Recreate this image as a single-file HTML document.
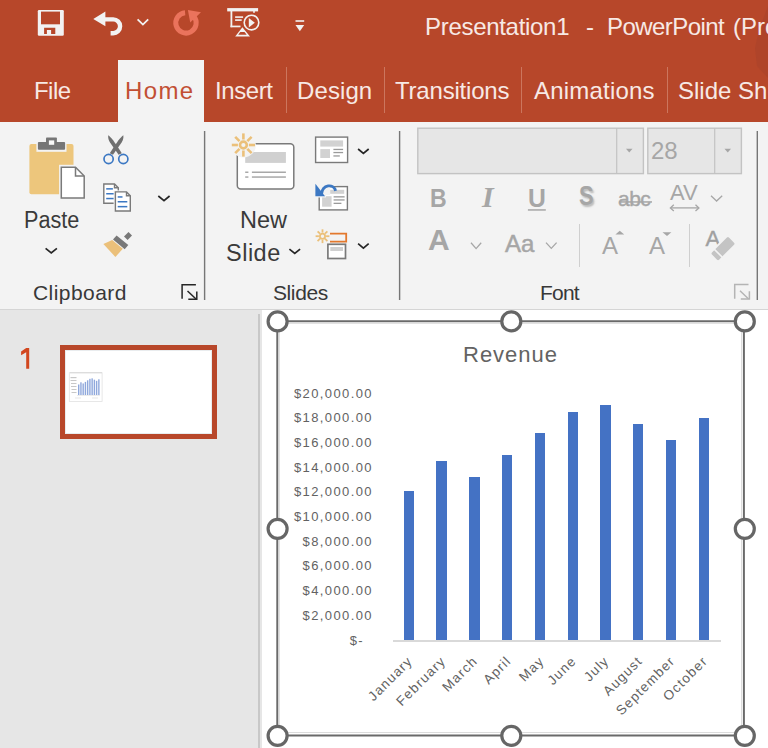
<!DOCTYPE html>
<html><head><meta charset="utf-8">
<style>
*{margin:0;padding:0;box-sizing:border-box}
html,body{width:768px;height:748px;overflow:hidden;background:#fff}
body{position:relative;font-family:"Liberation Sans",sans-serif}
.a{position:absolute}
.t{position:absolute;line-height:1;white-space:nowrap}
svg{position:absolute;overflow:visible}
.lab{font-size:13px;letter-spacing:1.4px;color:#626262;text-align:right}
.xl{font-size:13.5px;letter-spacing:1.2px;color:#626262;transform-origin:100% 50%;transform:rotate(-45deg)}
</style></head><body>
<!-- title bar + tabs -->
<div class="a" style="left:0;top:0;width:768px;height:122px;background:#B7472A"></div>
<div class="a" style="left:118px;top:60px;width:86px;height:62px;background:#F3F3F3"></div>

<svg width="768" height="122" style="left:0;top:0"><path d="M768 6 L759 30 L755 48 L757 66 L768 78 Z" fill="#AD432A" opacity="0.8"/></svg>
<!-- title text -->
<div class="t" id="t1" style="left:425px;top:15px;font-size:24px;letter-spacing:-0.3px;color:#F7E9E5">Presentation1</div>
<div class="t" style="left:586px;top:15px;font-size:24px;color:#F7E9E5">-</div>
<div class="t" id="t2" style="left:607px;top:15px;font-size:24px;letter-spacing:-0.55px;color:#F7E9E5">PowerPoint</div>
<div class="t" style="left:733px;top:15px;font-size:24px;color:#F7E9E5">(Pro</div>

<!-- tabs -->
<div class="t" id="tf" style="left:34px;top:79px;font-size:24px;letter-spacing:-0.55px;color:#F7E9E5">File</div>
<div class="t" style="left:125px;top:79px;font-size:24px;letter-spacing:1.4px;color:#C24F33">Home</div>
<div class="t" id="ti" style="left:215px;top:79px;font-size:24px;letter-spacing:-0.4px;color:#F7E9E5">Insert</div>
<div class="t" id="td" style="left:297px;top:79px;font-size:24px;letter-spacing:0.1px;color:#F7E9E5">Design</div>
<div class="t" id="tt" style="left:395px;top:79px;font-size:24px;letter-spacing:-0.2px;color:#F7E9E5">Transitions</div>
<div class="t" id="ta" style="left:534px;top:79px;font-size:24px;letter-spacing:0.2px;color:#F7E9E5">Animations</div>
<div class="t" style="left:678px;top:79px;font-size:24px;color:#F7E9E5">Slide Show</div>
<div class="a" style="left:286px;top:67px;width:1px;height:46px;background:#CC765E"></div>
<div class="a" style="left:384px;top:67px;width:1px;height:46px;background:#CC765E"></div>
<div class="a" style="left:521px;top:67px;width:1px;height:46px;background:#CC765E"></div>
<div class="a" style="left:667px;top:67px;width:1px;height:46px;background:#CC765E"></div>

<!-- ribbon -->
<div class="a" style="left:0;top:122px;width:768px;height:187px;background:#F3F3F3"></div>
<div class="a" style="left:0;top:309px;width:768px;height:1px;background:#D5D5D5"></div>
<svg width="768" height="310" style="left:0;top:0"><g fill="#767676"><rect x="203.9" y="131" width="1.4" height="169"/><rect x="398.9" y="131" width="1.4" height="169"/><rect x="756.6" y="131" width="1.4" height="169"/></g></svg>

<!-- title bar icons -->
<svg width="768" height="310" style="left:0;top:0">
<g fill="#F2F2F2">
<rect x="37.8" y="10" width="26" height="25.8" rx="1.2"/>
</g>
<rect x="41" y="11.6" width="19" height="12.7" fill="#B7472A"/>
<path d="M44.1 34.1 V27.8 H55.3 V34.1 H51.1 V30.1 H46.9 V34.1 Z" fill="#B7472A"/>
<path d="M93.3 19 L105.4 11.6 V26.2 Z" fill="#F2F2F2"/>
<path d="M103 19.4 H113.2 A6.9 6.9 0 0 1 113.2 33.2 H110.6" stroke="#F2F2F2" stroke-width="4.4" fill="none"/>
<polyline points="137.6,19.3 142.9,24.6 148.2,19.3" stroke="#F2F2F2" stroke-width="1.8" fill="none"/>
<path d="M185.1 12.7 A10.2 10.2 0 1 0 193.8 16.3" stroke="#EA735C" stroke-width="5" fill="none"/>
<path d="M187.9 10 L201 12.2 L190.2 22.5 Z" fill="#EA735C"/>
<g fill="#F2F2F2">
<rect x="227.2" y="8.1" width="30.9" height="3.3"/>
<rect x="230.5" y="11" width="1.8" height="16.2"/>
<rect x="230.5" y="25.6" width="10" height="1.7"/>
<rect x="253.2" y="11" width="1.6" height="1.8"/>
<rect x="235.1" y="16.3" width="8" height="1.6"/>
<rect x="235.1" y="19.3" width="6.6" height="1.6"/>
<path d="M248.8 17.9 L254.8 22.7 L248.8 27.5 Z"/>
<rect x="295.5" y="20.2" width="8.7" height="1.6"/>
<path d="M295.5 25 H304.2 L299.85 31.2 Z"/>
</g>
<circle cx="251.5" cy="22.6" r="7.3" stroke="#F2F2F2" stroke-width="1.6" fill="none"/>
<path d="M242.4 27.2 L235.2 36.4 H250 Z" fill="#F2F2F2"/><path d="M240.3 32 H244.5 L246.7 34.7 H238.2 Z" fill="#B7472A"/>

<!-- paste -->
<rect x="29.4" y="143.9" width="44.1" height="50.4" rx="2" fill="#EDC67C"/>
<rect x="36.4" y="139" width="30.1" height="12.8" fill="#F3F3F3"/>
<rect x="37.9" y="141.9" width="27.2" height="7.9" rx="1" fill="#767676"/>
<rect x="46" y="137.4" width="10.9" height="6" rx="0.8" fill="#767676"/>
<rect x="48.9" y="140.4" width="5.3" height="4.4" fill="#F8F8F8"/>
<rect x="59.1" y="164.8" width="27.5" height="36" fill="#F3F3F3"/>
<path d="M61.3 167.3 H75.5 L84.2 176 V198.1 H61.3 Z" fill="#fff" stroke="#7A7A7A" stroke-width="1.5"/>
<path d="M75.5 167.3 V176 H84.2" fill="none" stroke="#7A7A7A" stroke-width="1.5"/>
<!-- scissors -->
<g fill="#707070">
<path d="M108.2 135.3 C111 137.2 114 141 121.8 153.2 L118.6 154.8 L110 142.5 C108.5 140 108 138 108.2 135.3 Z"/>
<path d="M123.4 135.3 C120.6 137.2 117.6 141 109.8 153.2 L113 154.8 L121.6 142.5 C123.1 140 123.6 138 123.4 135.3 Z"/>
</g>
<g stroke="#3C78C3" stroke-width="1.7" fill="#F3F3F3">
<circle cx="108.6" cy="159" r="4.6"/><circle cx="123.3" cy="159" r="4.6"/>
</g>
<!-- copy -->
<g stroke="#7A7A7A" stroke-width="1.4" fill="#fff">
<path d="M103.8 184 H114.5 L118.3 187.8 V203.3 H103.8 Z"/>
</g>
<path d="M114.5 184 V187.8 H118.3" stroke="#7A7A7A" stroke-width="1.4" fill="none"/>
<g fill="#3C78C3">
<rect x="106.2" y="188.1" width="6.7" height="1.5"/>
<rect x="106.2" y="193" width="8" height="1.5"/>
<rect x="106.2" y="197.8" width="8" height="1.5"/>
</g>
<rect x="113.6" y="190.4" width="18.5" height="22.5" fill="#F3F3F3"/>
<path d="M115.4 191.9 H126.5 L130.3 195.7 V211 H115.4 Z" fill="#fff" stroke="#7A7A7A" stroke-width="1.4"/>
<path d="M126.5 191.9 V195.7 H130.3" stroke="#7A7A7A" stroke-width="1.4" fill="none"/>
<g fill="#3C78C3">
<rect x="117.7" y="196.2" width="4.8" height="1.5"/>
<rect x="117.7" y="201" width="9.6" height="1.5"/>
<rect x="117.7" y="205.9" width="9.6" height="1.5"/>
</g>
<!-- format painter -->
<path d="M103.4 244.1 L112.2 239.9 L122.8 248.8 L115.4 257 Z" fill="#EBC07A"/>
<path d="M116.6 235.4 L128.3 245 L124.7 249.2 L113 239.6 Z" fill="#787878"/>
<path d="M128.5 232 L132 235.6 L127.6 240 L124 236.4 Z" fill="#787878"/>
<!-- chevrons dark -->
<g stroke="#262626" stroke-width="1.7" fill="none">
<polyline points="158.3,196 164,200.6 169.6,196"/>
<polyline points="45.6,248.4 51.25,253 56.9,248.4"/>
<polyline points="289.4,249.1 294.75,253.5 300.1,249.1"/>
<polyline points="358.1,149 363.4,153.5 368.7,149"/>
<polyline points="358.1,243.7 363.4,248.2 368.7,243.7"/>
</g>
<!-- launcher clipboard -->
<g stroke="#262626" stroke-width="1.5" fill="none">
<polyline points="182.1,298.8 182.1,284.7 195.9,284.7"/>
<line x1="187.5" y1="291" x2="196" y2="299"/>
<polyline points="196.8,291.5 196.8,299.3 188.3,299.3"/>
</g>
<g stroke="#B4B4B4" stroke-width="1.5" fill="none">
<polyline points="734.7,298.8 734.7,284.5 748.5,284.5"/>
<line x1="740" y1="290.8" x2="748.6" y2="299"/>
<polyline points="749.4,291.3 749.4,299.1 740.8,299.1"/>
</g>
<!-- new slide -->
<rect x="237.3" y="143.8" width="56.5" height="45.1" rx="3.5" fill="#fff" stroke="#7A7A7A" stroke-width="1.5"/>
<rect x="245.2" y="152" width="40.7" height="10.9" fill="#D0D0D0"/>
<g fill="#A8A8A8">
<rect x="245.2" y="171.5" width="3.2" height="1.5"/><rect x="251.9" y="171.5" width="34" height="1.5"/>
<rect x="245.2" y="176.3" width="3.2" height="1.5"/><rect x="251.9" y="176.3" width="34" height="1.5"/>
</g>
<circle cx="243.4" cy="145" r="12.5" fill="#F3F3F3"/>
<g stroke="#EBC07A" stroke-width="2.6">
<circle cx="243.4" cy="145" r="3.4" fill="none"/>
<line x1="243.4" y1="133.4" x2="243.4" y2="139.5"/><line x1="243.4" y1="150.5" x2="243.4" y2="156.6"/>
<line x1="231.8" y1="145" x2="237.9" y2="145"/><line x1="248.9" y1="145" x2="255" y2="145"/>
<line x1="235.2" y1="136.8" x2="239.5" y2="141.1"/><line x1="247.3" y1="148.9" x2="251.6" y2="153.2"/>
<line x1="251.6" y1="136.8" x2="247.3" y2="141.1"/><line x1="239.5" y1="148.9" x2="235.2" y2="153.2"/>
</g>
<!-- layout -->
<rect x="315.6" y="137.1" width="32" height="25.4" fill="#fff" stroke="#7A7A7A" stroke-width="1.4"/>
<g fill="#D2D2D2"><rect x="320.3" y="140.4" width="22.8" height="6.2"/><rect x="320.3" y="149.1" width="9.7" height="8.9"/></g>
<g fill="#9A9A9A"><rect x="333.4" y="148.8" width="9.7" height="1.3"/><rect x="333.4" y="151.9" width="9.7" height="1.3"/><rect x="333.4" y="155.3" width="6.4" height="1.3"/></g>
<!-- reset -->
<rect x="319.2" y="186.6" width="28.2" height="23.3" fill="#fff" stroke="#7A7A7A" stroke-width="1.4"/>
<g fill="#D2D2D2"><rect x="330.2" y="189.8" width="14" height="4"/><rect x="322.1" y="196.2" width="9.5" height="10.5"/></g>
<g fill="#9A9A9A"><rect x="333.6" y="196.2" width="11" height="1.3"/><rect x="333.6" y="199.3" width="11" height="1.3"/><rect x="333.6" y="202.7" width="7.8" height="1.3"/></g>
<path d="M314 181 H336.5 V186 H330 V195 H326 V197.5 H314 Z" fill="#F3F3F3"/>
<path d="M321.5 194 C322.5 184.5 333.5 183 335.6 190.8" stroke="#3C78C3" stroke-width="2.8" fill="none"/>
<path d="M315.4 183.7 V196.2 H325 Z" fill="#3C78C3"/>
<!-- section -->
<path d="M330 233.7 H346.2 V241.6 H330" stroke="#E3782D" stroke-width="1.8" fill="none"/>
<rect x="327.9" y="244.3" width="17.6" height="14.2" fill="#fff" stroke="#7A7A7A" stroke-width="1.7"/>
<rect x="330.3" y="247" width="12.7" height="4" fill="#D0D0D0"/>
<g stroke="#EBC07A" stroke-width="1.8">
<circle cx="322.5" cy="236.2" r="2.6" fill="none"/>
<line x1="322.5" y1="229.3" x2="322.5" y2="232.6"/><line x1="322.5" y1="239.8" x2="322.5" y2="243.1"/>
<line x1="315.6" y1="236.2" x2="318.9" y2="236.2"/><line x1="326.1" y1="236.2" x2="329.4" y2="236.2"/>
<line x1="317.6" y1="231.3" x2="320" y2="233.7"/><line x1="325" y1="238.7" x2="327.4" y2="241.1"/>
<line x1="327.4" y1="231.3" x2="325" y2="233.7"/><line x1="320" y1="238.7" x2="317.6" y2="241.1"/>
</g>
</svg>

<!-- font group -->
<svg width="768" height="310" style="left:0;top:0"><g fill="#E6E6E6" stroke="#C3C3C3" stroke-width="1.4"><rect x="417.8" y="128.2" width="225.6" height="45.4"/><rect x="647.8" y="128.2" width="93.6" height="45.4"/></g><g fill="#C3C3C3"><rect x="616.1" y="128.2" width="1.2" height="45.4"/><rect x="714.1" y="128.2" width="1.2" height="45.4"/></g></svg>
<svg width="768" height="310" style="left:0;top:0">
<path d="M626 148.8 H632.5 L629.25 152.4 Z" fill="#A6A6A6"/>
<path d="M724.5 148.8 H731 L727.75 152.4 Z" fill="#A6A6A6"/>
<g stroke="#A6A6A6" stroke-width="1.3" fill="none">
<polyline points="711,195.8 716.6,201 722.2,195.8"/>
<polyline points="471,242.8 476.1,248.6 481.2,242.8"/>
<polyline points="546,242.6 551.3,248.4 556.6,242.6"/>
<line x1="671" y1="207.9" x2="698.5" y2="207.9"/>
<polyline points="673.8,204.8 670.4,207.9 673.8,211"/>
<polyline points="695.5,204.8 698.9,207.9 695.5,211"/>
</g>
<rect x="527.9" y="209.2" width="17.9" height="1.5" fill="#A6A6A6"/>
<rect x="619" y="201.2" width="33" height="1.5" fill="#A6A6A6"/>
<path d="M615.4 234.4 L619.8 230.7 L624.2 234.4 Z" fill="#A6A6A6"/>
<path d="M662.5 232.2 H671.4 L667 236 Z" fill="#A6A6A6"/>

</svg>
<div class="a" style="left:579px;top:224px;width:1px;height:43px;background:#CFCFCF"></div>
<div class="a" style="left:688.5px;top:224px;width:1px;height:43px;background:#CFCFCF"></div>
<div class="t" style="left:651px;top:139px;font-size:24px;color:#A6A6A6">28</div>
<div class="t" style="left:429.5px;top:184.5px;font-size:26.5px;font-weight:bold;color:#A6A6A6;transform:scaleX(0.87);transform-origin:0 0">B</div>
<div class="t" style="left:482px;top:182px;font-size:30px;font-weight:bold;font-style:italic;font-family:'Liberation Serif',serif;color:#A6A6A6">I</div>
<div class="t" style="left:527.5px;top:184.5px;font-size:26px;font-weight:bold;color:#A6A6A6;transform:scaleX(0.95);transform-origin:0 0">U</div>
<div class="t" style="left:578.5px;top:181.5px;font-size:28px;font-weight:bold;color:#A6A6A6;text-shadow:2px 2px 2px rgba(140,140,140,0.55);transform:scaleX(0.78);transform-origin:0 0">S</div>
<div class="t" style="left:618px;top:188px;font-size:21px;letter-spacing:-0.5px;color:#A6A6A6;-webkit-text-stroke:0.4px #A6A6A6">abc</div>
<div class="t" style="left:670px;top:182px;font-size:22px;color:#A6A6A6">AV</div>
<div class="t" style="left:428px;top:225px;font-size:30px;font-weight:bold;color:#A6A6A6">A</div>
<div class="t" style="left:505px;top:232px;font-size:24px;color:#A6A6A6;-webkit-text-stroke:0.5px #A6A6A6">Aa</div>
<div class="t" style="left:602px;top:234px;font-size:24px;color:#A6A6A6">A</div>
<div class="t" style="left:649px;top:234px;font-size:24px;color:#A6A6A6">A</div>
<div class="t" style="left:705.5px;top:227.5px;font-size:22px;color:#A0A0A0;-webkit-text-stroke:0.4px #A0A0A0">A</div>
<svg width="768" height="310" style="left:0;top:0"><g transform="rotate(-45 723 248.6)">
<rect x="710" y="242.6" width="26" height="12" rx="2.4" fill="#C4C4C4" stroke="#F3F3F3" stroke-width="2"/>
<rect x="715.6" y="241.6" width="1.6" height="14" fill="#F3F3F3"/>
</g></svg>
<!-- ribbon labels -->
<div class="t" id="pa" style="left:24px;top:209px;font-size:23.5px;color:#3A3A3A;transform:scaleX(0.92);transform-origin:0 0">Paste</div>
<div class="t" id="ne" style="left:240px;top:209px;font-size:23.5px;color:#3A3A3A">New</div>
<div class="t" id="sl" style="left:226px;top:242px;font-size:23.5px;letter-spacing:0.5px;color:#3A3A3A">Slide</div>
<div class="t" id="cl" style="left:33px;top:282px;font-size:21px;color:#383838;letter-spacing:0.45px">Clipboard</div>
<div class="t" id="ss" style="left:273px;top:282px;font-size:21px;color:#383838;letter-spacing:-0.4px">Slides</div>
<div class="t" id="fo" style="left:540px;top:282px;font-size:21px;color:#383838;letter-spacing:-0.8px">Font</div>

<!-- left pane -->
<div class="a" style="left:0;top:310px;width:262px;height:438px;background:#E6E6E6"></div>
<div class="a" style="left:258px;top:314px;width:2px;height:434px;background:#C8C8C8"></div>
<svg width="40" height="40" style="left:0;top:340px"><path d="M26.2 8 H29.2 V28.7 H26.2 V12.2 L21.1 15.2 V11.6 Z" fill="#D2471F"/></svg>
<div class="a" style="left:60px;top:345px;width:157px;height:94px;border:5px solid #B8472A;background:#fff;box-shadow:inset 0 0 0 1px #E9ECEE"></div>

<!-- chart -->
<div class="a" style="left:741px;top:311px;width:1px;height:422px;background:#DCDCDC"></div>
<div class="a" style="left:280px;top:732px;width:462px;height:1px;background:#DCDCDC"></div>
<div class="a" style="left:279px;top:323px;width:462px;height:1px;background:#E2E2E2"></div>
<div class="a" style="left:279px;top:323px;width:1px;height:410px;background:#E2E2E2"></div>
<div class="t" style="left:463px;top:344px;font-size:22px;letter-spacing:1px;color:#636363">Revenue</div>
<div class="t lab" style="right:395px;top:386.5px">$20,000.00</div>
<div class="t lab" style="right:395px;top:411.2px">$18,000.00</div>
<div class="t lab" style="right:395px;top:435.9px">$16,000.00</div>
<div class="t lab" style="right:395px;top:460.6px">$14,000.00</div>
<div class="t lab" style="right:395px;top:485.3px">$12,000.00</div>
<div class="t lab" style="right:395px;top:510.0px">$10,000.00</div>
<div class="t lab" style="right:395px;top:534.7px">$8,000.00</div>
<div class="t lab" style="right:395px;top:559.4px">$6,000.00</div>
<div class="t lab" style="right:395px;top:584.1px">$4,000.00</div>
<div class="t lab" style="right:395px;top:608.8px">$2,000.00</div>
<div class="t lab" style="right:404px;top:633.5px">$-</div>
<div class="a" style="left:392.5px;top:640px;width:328px;height:2px;background:#D9D9D9"></div>
<div class="a" style="left:403.70px;top:491.4px;width:10.3px;height:148.6px;background:#4472C4"></div>
<div class="a" style="left:436.48px;top:460.8px;width:10.3px;height:179.2px;background:#4472C4"></div>
<div class="a" style="left:469.26px;top:476.8px;width:10.3px;height:163.2px;background:#4472C4"></div>
<div class="a" style="left:502.04px;top:454.9px;width:10.3px;height:185.1px;background:#4472C4"></div>
<div class="a" style="left:534.82px;top:432.5px;width:10.3px;height:207.5px;background:#4472C4"></div>
<div class="a" style="left:567.60px;top:411.5px;width:10.3px;height:228.5px;background:#4472C4"></div>
<div class="a" style="left:600.38px;top:405px;width:10.3px;height:235.0px;background:#4472C4"></div>
<div class="a" style="left:633.16px;top:423.9px;width:10.3px;height:216.1px;background:#4472C4"></div>
<div class="a" style="left:665.94px;top:439.8px;width:10.3px;height:200.2px;background:#4472C4"></div>
<div class="a" style="left:698.72px;top:418.1px;width:10.3px;height:221.9px;background:#4472C4"></div>
<div class="t xl" style="right:357.6px;top:652px">January</div>
<div class="t xl" style="right:324.8px;top:652px">February</div>
<div class="t xl" style="right:292.0px;top:652px">March</div>
<div class="t xl" style="right:259.2px;top:652px">April</div>
<div class="t xl" style="right:226.4px;top:652px">May</div>
<div class="t xl" style="right:193.6px;top:652px">June</div>
<div class="t xl" style="right:160.8px;top:652px">July</div>
<div class="t xl" style="right:128.0px;top:652px">August</div>
<div class="t xl" style="right:95.2px;top:652px">September</div>
<div class="t xl" style="right:62.4px;top:652px">October</div>
<svg width="768" height="748" style="left:0;top:0">
<g stroke="#6A6A6A" stroke-width="2" fill="none">
<line x1="277.3" y1="321.2" x2="744.8" y2="321.2"/>
<line x1="277.3" y1="735.6" x2="744.8" y2="735.6"/>
<line x1="277.3" y1="321.2" x2="277.3" y2="735.6"/>
<line x1="743.9" y1="321.2" x2="743.9" y2="735.6"/>
</g>
<g stroke="#666" stroke-width="3.2" fill="#fff">
<circle cx="277.6" cy="321.4" r="9.5"/><circle cx="511.3" cy="321.4" r="9.5"/><circle cx="744.8" cy="321.4" r="9.5"/>
<circle cx="277.6" cy="528.8" r="9.5"/><circle cx="744.8" cy="528.8" r="9.5"/>
<circle cx="277.6" cy="735.8" r="9.5"/><circle cx="511.3" cy="735.8" r="9.5"/><circle cx="744.8" cy="735.8" r="9.5"/>
</g></svg>
<!-- mini -->
<svg width="258" height="440" style="left:0;top:309px">
<rect x="69.3" y="63.7" width="32.8" height="28.8" fill="#fff" stroke="#E2E2E2" stroke-width="0.8"/>
<rect x="70" y="63.3" width="32" height="1" fill="#D8D8D8"/>
<g fill="#C8C8C8"><rect x="70.5" y="68" width="6" height="1.2"/><rect x="70.5" y="71" width="6" height="1"/><rect x="71" y="74" width="5.5" height="1"/><rect x="71" y="77" width="5.5" height="1"/><rect x="71.5" y="80" width="5" height="1"/><rect x="71.5" y="83" width="5" height="1"/></g>
<g fill="#8FA8DC"><rect x="78.00" y="75.48" width="1.4" height="10.52"/><rect x="80.24" y="73.31" width="1.4" height="12.69"/><rect x="82.48" y="74.45" width="1.4" height="11.55"/><rect x="84.72" y="72.90" width="1.4" height="13.10"/><rect x="86.96" y="71.31" width="1.4" height="14.69"/><rect x="89.20" y="69.82" width="1.4" height="16.18"/><rect x="91.44" y="69.36" width="1.4" height="16.64"/><rect x="93.68" y="70.70" width="1.4" height="15.30"/><rect x="95.92" y="71.83" width="1.4" height="14.17"/><rect x="98.16" y="70.29" width="1.4" height="15.71"/></g>
<rect x="77" y="86" width="23" height="0.6" fill="#E0E0E0"/>
<rect x="75" y="88.5" width="6" height="1" fill="#E8E8E8"/><rect x="92" y="88.5" width="6" height="1" fill="#E8E8E8"/>
</svg>
</body></html>
